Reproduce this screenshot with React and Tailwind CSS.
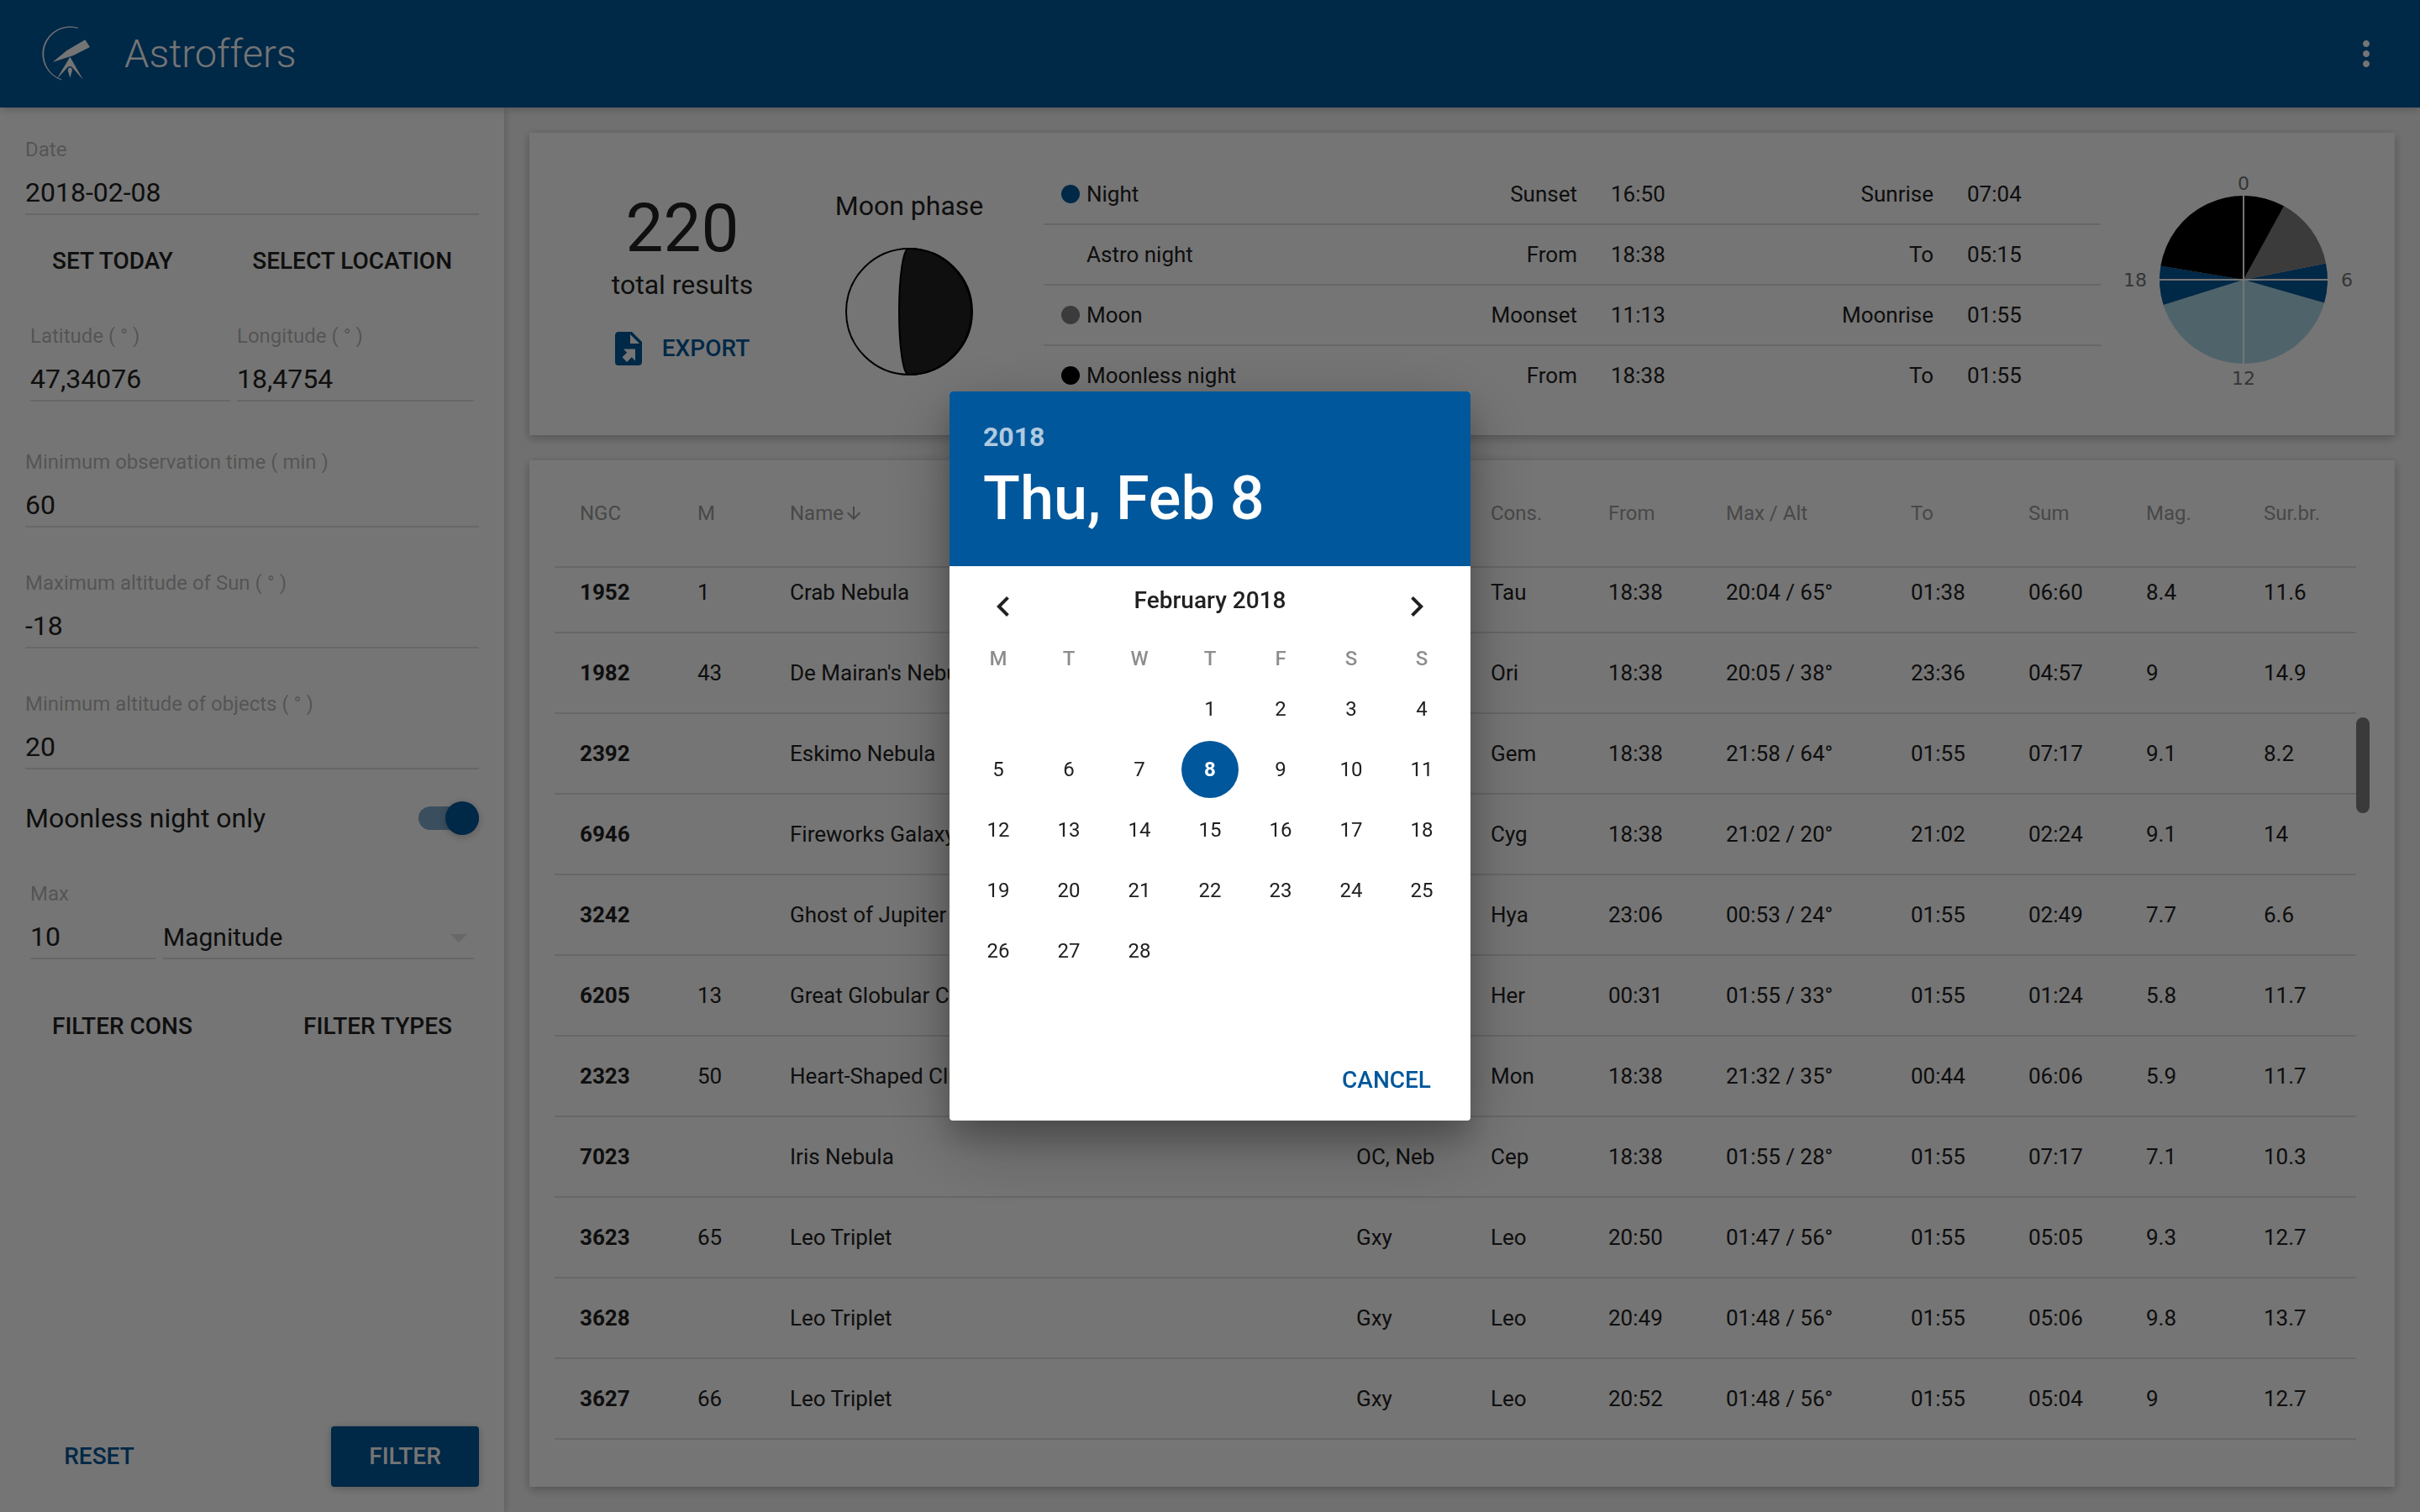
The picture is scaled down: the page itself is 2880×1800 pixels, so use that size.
import React from "react";

const RESULTS = [
  ["1952", "1", "Crab Nebula", "", "Tau", "18:38", "20:04 / 65°", "01:38", "06:60", "8.4", "11.6"],
  ["1982", "43", "De Mairan's Nebula", "", "Ori", "18:38", "20:05 / 38°", "23:36", "04:57", "9", "14.9"],
  ["2392", "", "Eskimo Nebula", "", "Gem", "18:38", "21:58 / 64°", "01:55", "07:17", "9.1", "8.2"],
  ["6946", "", "Fireworks Galaxy", "", "Cyg", "18:38", "21:02 / 20°", "21:02", "02:24", "9.1", "14"],
  ["3242", "", "Ghost of Jupiter", "", "Hya", "23:06", "00:53 / 24°", "01:55", "02:49", "7.7", "6.6"],
  ["6205", "13", "Great Globular Cluster", "", "Her", "00:31", "01:55 / 33°", "01:55", "01:24", "5.8", "11.7"],
  ["2323", "50", "Heart-Shaped Cluster", "", "Mon", "18:38", "21:32 / 35°", "00:44", "06:06", "5.9", "11.7"],
  ["7023", "", "Iris Nebula", "OC, Neb", "Cep", "18:38", "01:55 / 28°", "01:55", "07:17", "7.1", "10.3"],
  ["3623", "65", "Leo Triplet", "Gxy", "Leo", "20:50", "01:47 / 56°", "01:55", "05:05", "9.3", "12.7"],
  ["3628", "", "Leo Triplet", "Gxy", "Leo", "20:49", "01:48 / 56°", "01:55", "05:06", "9.8", "13.7"],
  ["3627", "66", "Leo Triplet", "Gxy", "Leo", "20:52", "01:48 / 56°", "01:55", "05:04", "9", "12.7"],
];

const COLUMNS = [
  ["NGC", "w-[140px]"],
  ["M", "w-[110px]"],
  ["Name", ""],
  ["Type", "w-[160px]"],
  ["Cons.", "w-[140px]"],
  ["From", "w-[140px]"],
  ["Max / Alt", "w-[220px]"],
  ["To", "w-[140px]"],
  ["Sum", "w-[140px]"],
  ["Mag.", "w-[140px]"],
  ["Sur.br.", "w-[140px]"],
];

const PERIODS = [
  ["bg-[#01579b]", "Night", "Sunset", "16:50", "Sunrise", "07:04"],
  ["bg-transparent", "Astro night", "From", "18:38", "To", "05:15"],
  ["bg-[#808080]", "Moon", "Moonset", "11:13", "Moonrise", "01:55"],
  ["bg-black", "Moonless night", "From", "18:38", "To", "01:55"],
];

const WEEKDAYS = ["M", "T", "W", "T", "F", "S", "S"];
const DAYS = Array.from({ length: 28 }, (_, i) => i + 1);

function Logo() {
  return (
    <svg className="size-20 fill-white" viewBox="0 12 240 240" aria-hidden="true">
      <path d="M158 40A97 97 0 0 0 100 225A96.800 96.800 0 0 1 158 40Z" stroke="#fff" strokeWidth="2" />
      <path d="M184 82L201 108L142 138L68 162L118 121Z" />
      <path d="M130 143L177 225L138 181Q130 171 121 181L82 223Z" />
      <path d="M130 180Q138 184 138 191L130 218L122 191Q122 184 130 180Z" />
    </svg>
  );
}

function Field({ id, label, value, className = "" }) {
  return (
    <div className={`flex flex-col pt-[34px] pb-4 ${className}`}>
      <label htmlFor={id} className="text-2xl leading-8 text-black/30 whitespace-nowrap">
        {label}
      </label>
      <input
        id={id}
        type="text"
        defaultValue={value}
        className="mt-[10px] h-[52px] w-full min-w-0 border-b-2 border-[#e0e0e0] bg-transparent text-[32px] outline-none"
      />
    </div>
  );
}

function FlatButton({ children, className = "" }) {
  return (
    <button
      type="button"
      className={`flex h-[72px] min-w-44 items-center justify-center rounded px-8 text-[28px] font-medium whitespace-nowrap uppercase ${className}`}
    >
      {children}
    </button>
  );
}

function Sidebar() {
  return (
    <aside className="relative z-10 flex w-[600px] shrink-0 flex-col bg-white px-[30px] pb-[30px] shadow-[0_2px_12px_rgba(0,0,0,0.12),0_2px_8px_rgba(0,0,0,0.12)]">
      <Field id="date" label="Date" value="2018-02-08" />
      <div className="flex h-[78px] items-center justify-between">
        <FlatButton>Set today</FlatButton>
        <FlatButton>Select location</FlatButton>
      </div>
      <div className="flex gap-2 px-[6px] pb-[6px]">
        <Field id="lat" label="Latitude ( ° )" value="47,34076" className="w-[238px]" />
        <Field id="lon" label="Longitude ( ° )" value="18,4754" className="flex-1" />
      </div>
      <Field id="mintime" label="Minimum observation time ( min )" value="60" />
      <Field id="sunalt" label="Maximum altitude of Sun ( ° )" value="-18" />
      <Field id="objalt" label="Minimum altitude of objects ( ° )" value="20" />
      <label className="flex h-[82px] items-center justify-between pt-[2px] text-[32px]">
        Moonless night only
        <input type="checkbox" defaultChecked className="peer sr-only" />
        <span className="flex h-7 w-[72px] items-center justify-end rounded-full bg-[#01579b]/50">
          <span className="size-10 shrink-0 rounded-full bg-[#01579b] shadow-[0_2px_12px_rgba(0,0,0,0.12),0_2px_8px_rgba(0,0,0,0.12)]" />
        </span>
      </label>
      <div className="flex items-end gap-2 px-[6px]">
        <Field id="max" label="Max" value="10" className="w-[150px]" />
        <div className="relative mb-4 flex-1">
          <select
            aria-label="Limit by"
            defaultValue="Magnitude"
            className="h-[52px] w-full appearance-none border-b-2 border-[#e0e0e0] bg-transparent text-[30px] outline-none"
          >
            <option>Magnitude</option>
            <option>Surface brightness</option>
          </select>
          <svg className="pointer-events-none absolute top-[22px] right-2 h-[10px] w-5 fill-[#e0e0e0]" viewBox="0 0 20 10" aria-hidden="true">
            <path d="M0 0h20L10 10z" />
          </svg>
        </div>
      </div>
      <div className="mt-7 flex justify-between">
        <FlatButton>Filter cons</FlatButton>
        <FlatButton>Filter types</FlatButton>
      </div>
      <div className="mt-auto flex justify-between">
        <FlatButton className="text-[#01579b]">Reset</FlatButton>
        <FlatButton className="bg-[#01579b] text-white shadow-[0_2px_12px_rgba(0,0,0,0.12),0_2px_8px_rgba(0,0,0,0.12)]">Filter</FlatButton>
      </div>
    </aside>
  );
}

function point(minutes) {
  const a = (minutes / 1440) * 2 * Math.PI;
  return `${150 + 100 * Math.sin(a)} ${137 - 100 * Math.cos(a)}`;
}

function Slice({ from, to, fill }) {
  const span = (to - from + 1440) % 1440;
  return <path d={`M150 137L${point(from)}A100 100 0 ${span > 720 ? 1 : 0} 1 ${point(to)}Z`} fill={fill} />;
}

function DayClock() {
  return (
    <svg className="h-72 w-[300px] shrink-0" viewBox="0 0 300 288" role="img" aria-label="Night periods over 24 hours">
      <Slice from={424} to={1010} fill="#add8e6" />
      <Slice from={1010} to={1118} fill="#01579b" />
      <Slice from={315} to={424} fill="#01579b" />
      <Slice from={115} to={315} fill="#808080" />
      <Slice from={1118} to={115} fill="#000" />
      <path d="M150 37V237M50 137H250" stroke="#fff" strokeWidth="2" />
      <g fill="#757575" fontFamily="DejaVu Sans, sans-serif" fontSize="22" textAnchor="middle">
        <text x="150" y="30">0</text>
        <text x="273" y="145">6</text>
        <text x="150" y="262">12</text>
        <text x="21" y="145">18</text>
      </g>
    </svg>
  );
}

function Summary() {
  return (
    <section className="flex items-start bg-white px-[30px] pt-[38px] pb-[34px] shadow-[0_4px_12px_rgba(0,0,0,0.16),0_2px_10px_rgba(0,0,0,0.12)]">
      <div className="flex w-[304px] shrink-0 flex-col items-center pt-9">
        <div className="text-[80px] leading-[80px]">220</div>
        <div className="mt-[7px] text-[32px] leading-10">total results</div>
        <button type="button" className="mt-5 flex h-[72px] items-center gap-4 rounded pr-8 pl-6 text-[28px] font-medium text-[#01579b] uppercase">
          <svg className="size-12 fill-current" viewBox="0 0 24 24" aria-hidden="true">
            <path d="M6 2c-1.11 0-2 .89-2 2v16a2 2 0 0 0 2 2h12a2 2 0 0 0 2-2V8l-6-6H6m7 1.500L18.500 9H13V3.500M8.930 12.220H16v7.070l-2.120-2.120L11.050 20l-2.830-2.830 2.830-2.830-2.120-2.120z" />
          </svg>
          Export
        </button>
      </div>
      <div className="mr-[42px] flex w-[236px] shrink-0 flex-col items-center pt-[29px]">
        <div className="text-[32px] leading-10">Moon phase</div>
        <svg className="mt-[30px] size-[152px]" viewBox="0 0 152 152" role="img" aria-label="Moon phase">
          <circle cx="76" cy="76" r="75" fill="none" stroke="#000" strokeWidth="2" />
          <path d="M75 1A75 75 0 0 1 75 151A11 75 0 0 1 75 1Z" fill="#212121" stroke="#000" strokeWidth="2" />
        </svg>
      </div>
      <table className="mr-5 flex-1 table-fixed border-separate border-spacing-0 text-[26px] leading-[34px]">
        <colgroup>
          <col />
          <col className="w-[252px]" />
          <col className="w-[212px]" />
          <col className="w-[212px]" />
          <col className="w-[179px]" />
        </colgroup>
        <tbody>
          {PERIODS.map(([dot, name, a, from, b, to]) => (
            <tr key={name} className="h-[72px] *:border-b-2 *:border-[#e0e0e0] last:*:border-transparent">
              <th scope="row" className="text-left font-normal">
                <span className="flex items-center gap-2 pl-[21px]">
                  <span className={`size-[22px] rounded-full ${dot}`} />
                  {name}
                </span>
              </th>
              <td className="pr-5 text-right">{a}</td>
              <td className="pl-5">{from}</td>
              <td className="pr-5 text-right">{b}</td>
              <td className="pl-5">{to}</td>
            </tr>
          ))}
        </tbody>
      </table>
      <DayClock />
    </section>
  );
}

function Results() {
  return (
    <section className="flex flex-1 items-start bg-white px-[30px] shadow-[0_4px_12px_rgba(0,0,0,0.16),0_2px_10px_rgba(0,0,0,0.12)]">
      <table className="flex-1 table-fixed border-separate border-spacing-0 text-left text-[26px] leading-[34px]">
        <colgroup>
          {COLUMNS.map(([name, width]) => (
            <col key={name} className={width} />
          ))}
        </colgroup>
        <thead>
          <tr className="h-32 text-2xl text-[#9e9e9e]">
            {COLUMNS.map(([name]) => (
              <th key={name} scope="col" className="border-b-2 border-[#e0e0e0] pl-[30px] font-normal whitespace-nowrap">
                <span className="flex items-center">
                  {name}
                  {name === "Name" && (
                    <svg className="size-6 fill-current" viewBox="0 0 24 24" aria-hidden="true">
                      <path d="M20 12l-1.410-1.410L13 16.170V4h-2v12.170l-5.580-5.590L4 12l8 8 8-8z" />
                    </svg>
                  )}
                </span>
              </th>
            ))}
          </tr>
        </thead>
        <tbody>
          {RESULTS.map((row) => (
            <tr key={row[0]} className="group h-24 first:h-[78px]">
              {row.map((cell, i) => (
                <td
                  key={COLUMNS[i][0]}
                  className={`border-b-2 border-[#e0e0e0] pl-[30px] whitespace-nowrap group-first:pb-[18px] ${i === 0 ? "font-bold" : ""}`}
                >
                  {cell}
                </td>
              ))}
            </tr>
          ))}
        </tbody>
      </table>
      <div className="-mr-4 w-4 shrink-0 self-stretch pt-[306px]">
        <div className="h-[114px] w-4 rounded-full bg-black/50" />
      </div>
      <div className="w-4 shrink-0" />
    </section>
  );
}

function DatePicker() {
  return (
    <div className="fixed inset-0 z-50 grid place-items-center bg-black/54">
      <div
        role="dialog"
        aria-modal="true"
        aria-label="Choose date"
        className="w-[620px] overflow-hidden rounded bg-white shadow-[0_28px_90px_rgba(0,0,0,0.25),0_20px_36px_rgba(0,0,0,0.22)]"
      >
        <div className="bg-[#01579b] px-10 pt-[38px] pb-11 font-medium text-white">
          <div className="text-[32px] leading-8 font-bold text-white/70">2018</div>
          <div className="mt-[22px] text-[72px] leading-[72px]">Thu, Feb 8</div>
        </div>
        <div className="flex items-start justify-between px-10 pt-6">
          <button type="button" aria-label="Previous month" className="size-12">
            <svg className="size-12 fill-current" viewBox="0 0 24 24" aria-hidden="true">
              <path d="M15.410 7.410L14 6l-6 6 6 6 1.410-1.410L10.830 12z" />
            </svg>
          </button>
          <div className="text-[28px] leading-[34px] font-medium">February 2018</div>
          <button type="button" aria-label="Next month" className="size-12">
            <svg className="size-12 fill-current" viewBox="0 0 24 24" aria-hidden="true">
              <path d="M10 6L8.590 7.410 13.170 12l-4.580 4.590L10 18l6-6z" />
            </svg>
          </button>
        </div>
        <div className="mt-[14px] grid grid-cols-7 px-4 text-center text-2xl leading-[48px] font-medium text-black/45">
          {WEEKDAYS.map((d, i) => (
            <span key={i}>{d}</span>
          ))}
        </div>
        <div className="grid grid-cols-7 grid-rows-[repeat(6,72px)] place-items-center px-4 text-2xl">
          {DAYS.map((d) => (
            <button
              key={d}
              type="button"
              className={`size-[68px] rounded-full ${d === 1 ? "col-start-4" : ""} ${d === 8 ? "bg-[#01579b] font-bold text-white" : ""}`}
            >
              {d}
            </button>
          ))}
        </div>
        <div className="mt-[10px] flex justify-end px-3 pb-3">
          <FlatButton className="text-[#01579b]">Cancel</FlatButton>
        </div>
      </div>
    </div>
  );
}

export default function App() {
  return (
    <div className="flex min-h-screen flex-col bg-[#f5f5f5] font-['Roboto',sans-serif] text-[#212121]">
      <header className="relative z-20 flex h-32 items-center bg-[#01579b] px-10 text-white shadow-[0_2px_12px_rgba(0,0,0,0.12),0_2px_8px_rgba(0,0,0,0.12)]">
        <Logo />
        <h1 className="ml-7 text-[47px] font-light">Astroffers</h1>
        <button type="button" aria-label="Menu" className="ml-auto size-12">
          <svg className="size-12 fill-current" viewBox="0 0 24 24" aria-hidden="true">
            <path d="M12 8c1.100 0 2-.900 2-2s-.900-2-2-2-2 .900-2 2 .900 2 2 2zm0 2c-1.100 0-2 .900-2 2s.900 2 2 2 2-.900 2-2-.900-2-2-2zm0 6c-1.100 0-2 .900-2 2s.900 2 2 2 2-.900 2-2-.900-2-2-2z" />
          </svg>
        </button>
      </header>
      <div className="flex flex-1">
        <Sidebar />
        <main className="flex min-w-0 flex-1 flex-col gap-[30px] p-[30px]">
          <Summary />
          <Results />
        </main>
      </div>
      <DatePicker />
    </div>
  );
}
